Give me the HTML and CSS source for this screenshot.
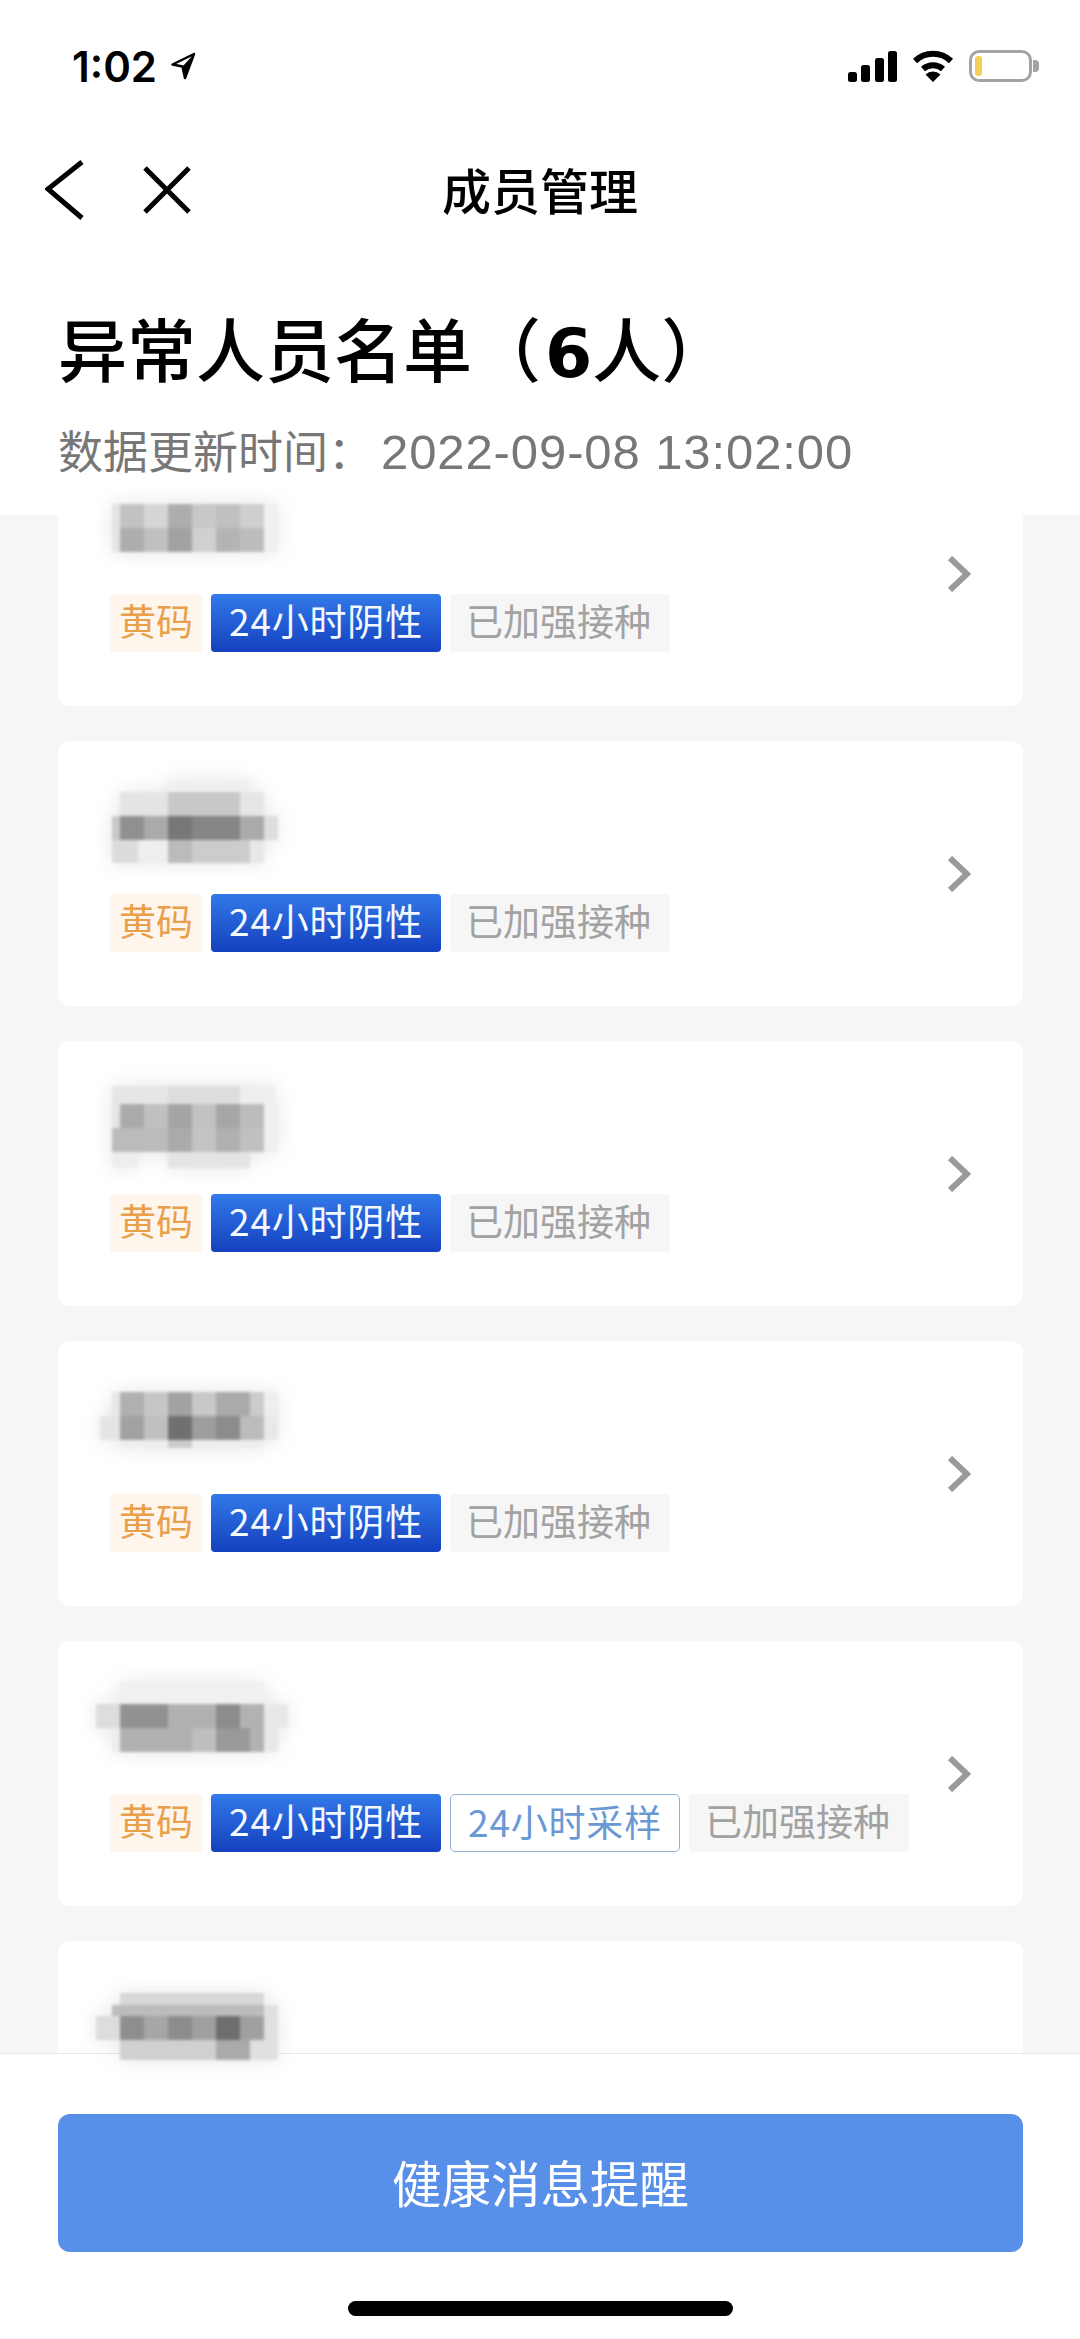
FILE: index.html
```html
<!DOCTYPE html>
<html lang="zh-CN">
<head>
    <meta charset="UTF-8">
    <meta name="viewport" content="width=device-width, initial-scale=1.0">
    <title>成员管理</title>
    <link rel="stylesheet" href="styles.css">
</head>
<body>
    <div class="page">
        <div class="header">
            <div class="status-bar">
                <div class="status-time">
                    <span>1:02</span>
                    <svg class="icon-location" width="26" height="28" viewBox="0 0 26 28">
                        <path d="M24 2 L2.500 12.500 L12.500 14.500 L15 26 Z" fill="none" stroke="#000" stroke-width="2.500" stroke-linejoin="round"/>
                        <path d="M24 2 L12.500 14.500 L15 26 Z" fill="#000"/>
                    </svg>
                </div>
                <div class="status-icons">
                    <svg width="49" height="31" viewBox="0 0 49 31">
                        <rect x="0" y="21" width="9" height="10" rx="2.500"/>
                        <rect x="13" y="14" width="9" height="17" rx="2.500"/>
                        <rect x="27" y="7" width="9" height="24" rx="2.500"/>
                        <rect x="40" y="0" width="9" height="31" rx="2.500"/>
                    </svg>
                    <svg width="42" height="32" viewBox="0 0 42 32">
                        <path d="M3 11 A26 26 0 0 1 39 11" fill="none" stroke="#000" stroke-width="6"/>
                        <path d="M11 19 A15 15 0 0 1 31 19" fill="none" stroke="#000" stroke-width="6"/>
                        <path d="M21 32 L13.500 24.500 A11 11 0 0 1 28.500 24.500 Z"/>
                    </svg>
                    <div class="battery">
                        <div class="battery-body"><div class="battery-level"></div></div>
                        <div class="battery-nub"></div>
                    </div>
                </div>
            </div>
            <div class="navbar">
                <div class="nav-icons">
                    <svg width="40" height="60" viewBox="0 0 40 60">
                        <path d="M37 2 L3 29 L37 58" fill="none" stroke="#000" stroke-width="5"/>
                    </svg>
                    <svg width="48" height="48" viewBox="0 0 48 48">
                        <path d="M2 2 L46 46 M46 2 L2 46" fill="none" stroke="#000" stroke-width="5"/>
                    </svg>
                </div>
                <div class="nav-title">成员管理</div>
            </div>
            <h1 class="page-title">异常人员名单（<span class="title-num">6</span>人）</h1>
            <div class="update-time">数据更新时间：<span class="update-value">2022-09-08 13:02:00</span></div>
        </div>

        <div class="member-list">
            <div class="card">
                <div class="card-body">
                    <svg class="name-mosaic" width="210" height="114" viewBox="0 -20 210 114">
                        <rect x="22" y="14" width="8" height="48" fill="#e4e4e4"/>
                        <rect x="174" y="14" width="14" height="48" fill="#f0f0f0"/>
                        <rect x="30" y="14" width="24" height="24" fill="#c2c2c2"/>
                        <rect x="54" y="14" width="24" height="24" fill="#d6d6d6"/>
                        <rect x="78" y="14" width="24" height="24" fill="#adadad"/>
                        <rect x="102" y="14" width="24" height="24" fill="#c8c8c8"/>
                        <rect x="126" y="14" width="24" height="24" fill="#c0c0c0"/>
                        <rect x="150" y="14" width="24" height="24" fill="#cfcfcf"/>
                        <rect x="30" y="38" width="24" height="24" fill="#adadad"/>
                        <rect x="54" y="38" width="24" height="24" fill="#c0c0c0"/>
                        <rect x="78" y="38" width="24" height="24" fill="#a2a2a2"/>
                        <rect x="102" y="38" width="24" height="24" fill="#d0d0d0"/>
                        <rect x="126" y="38" width="24" height="24" fill="#b4b4b4"/>
                        <rect x="150" y="38" width="24" height="24" fill="#bcbcbc"/>
                    </svg>
                    <div class="tags">
                        <span class="tag tag-yellow">黄码</span>
                        <span class="tag tag-blue">24小时阴性</span>
                        <span class="tag tag-gray">已加强接种</span>
                    </div>
                </div>
                <svg class="chevron" width="24" height="36" viewBox="0 0 24 36">
                    <path d="M3 2 L20 18 L3 34" fill="none" stroke="#9a9a9a" stroke-width="6"/>
                </svg>
            </div>

            <div class="card">
                <div class="card-body">
                    <svg class="name-mosaic" width="210" height="114" viewBox="0 0 210 114">
                        <rect x="78" y="10" width="82" height="12" fill="#f0f0f0"/>
                        <rect x="30" y="22" width="48" height="24" fill="#e4e4e4"/>
                        <rect x="78" y="22" width="72" height="24" fill="#c8c8c8"/>
                        <rect x="150" y="22" width="24" height="24" fill="#e6e6e6"/>
                        <rect x="22" y="46" width="8" height="24" fill="#c8c8c8"/>
                        <rect x="30" y="46" width="24" height="24" fill="#909090"/>
                        <rect x="54" y="46" width="24" height="24" fill="#aaaaaa"/>
                        <rect x="78" y="46" width="24" height="24" fill="#777777"/>
                        <rect x="102" y="46" width="48" height="24" fill="#868686"/>
                        <rect x="150" y="46" width="24" height="24" fill="#aaaaaa"/>
                        <rect x="174" y="46" width="14" height="24" fill="#dddddd"/>
                        <rect x="22" y="70" width="26" height="23" fill="#dcdcdc"/>
                        <rect x="48" y="70" width="30" height="23" fill="#eeeeee"/>
                        <rect x="78" y="70" width="24" height="23" fill="#bbbbbb"/>
                        <rect x="102" y="70" width="58" height="23" fill="#cccccc"/>
                        <rect x="160" y="70" width="14" height="23" fill="#e8e8e8"/>
                    </svg>
                    <div class="tags">
                        <span class="tag tag-yellow">黄码</span>
                        <span class="tag tag-blue">24小时阴性</span>
                        <span class="tag tag-gray">已加强接种</span>
                    </div>
                </div>
                <svg class="chevron" width="24" height="36" viewBox="0 0 24 36">
                    <path d="M3 2 L20 18 L3 34" fill="none" stroke="#9a9a9a" stroke-width="6"/>
                </svg>
            </div>

            <div class="card">
                <div class="card-body">
                    <svg class="name-mosaic" width="210" height="114" viewBox="0 0 210 114">
                        <rect x="22" y="16" width="56" height="18" fill="#e6e6e6"/>
                        <rect x="78" y="16" width="72" height="18" fill="#dddddd"/>
                        <rect x="150" y="16" width="35" height="18" fill="#eeeeee"/>
                        <rect x="22" y="34" width="8" height="24" fill="#e6e6e6"/>
                        <rect x="30" y="34" width="24" height="24" fill="#aaaaaa"/>
                        <rect x="54" y="34" width="24" height="24" fill="#c0c0c0"/>
                        <rect x="78" y="34" width="24" height="24" fill="#a4a4a4"/>
                        <rect x="102" y="34" width="24" height="24" fill="#c2c2c2"/>
                        <rect x="126" y="34" width="24" height="24" fill="#a6a6a6"/>
                        <rect x="150" y="34" width="24" height="24" fill="#bcbcbc"/>
                        <rect x="174" y="34" width="14" height="48" fill="#f0f0f0"/>
                        <rect x="22" y="58" width="56" height="24" fill="#bbbbbb"/>
                        <rect x="78" y="58" width="24" height="24" fill="#aaaaaa"/>
                        <rect x="102" y="58" width="24" height="24" fill="#c4c4c4"/>
                        <rect x="126" y="58" width="24" height="24" fill="#b0b0b0"/>
                        <rect x="150" y="58" width="24" height="24" fill="#c0c0c0"/>
                        <rect x="22" y="82" width="26" height="16" fill="#eeeeee"/>
                        <rect x="78" y="82" width="82" height="16" fill="#e4e4e4"/>
                    </svg>
                    <div class="tags">
                        <span class="tag tag-yellow">黄码</span>
                        <span class="tag tag-blue">24小时阴性</span>
                        <span class="tag tag-gray">已加强接种</span>
                    </div>
                </div>
                <svg class="chevron" width="24" height="36" viewBox="0 0 24 36">
                    <path d="M3 2 L20 18 L3 34" fill="none" stroke="#9a9a9a" stroke-width="6"/>
                </svg>
            </div>

            <div class="card">
                <div class="card-body">
                    <svg class="name-mosaic" width="210" height="114" viewBox="0 0 210 114">
                        <rect x="22" y="22" width="8" height="24" fill="#e8e8e8"/>
                        <rect x="30" y="22" width="24" height="24" fill="#b0b0b0"/>
                        <rect x="54" y="22" width="24" height="24" fill="#c6c6c6"/>
                        <rect x="78" y="22" width="24" height="24" fill="#a2a2a2"/>
                        <rect x="102" y="22" width="24" height="24" fill="#c8c8c8"/>
                        <rect x="126" y="22" width="34" height="24" fill="#aaaaaa"/>
                        <rect x="160" y="22" width="14" height="24" fill="#cccccc"/>
                        <rect x="174" y="22" width="14" height="24" fill="#eeeeee"/>
                        <rect x="10" y="46" width="20" height="24" fill="#e4e4e4"/>
                        <rect x="30" y="46" width="24" height="24" fill="#a2a2a2"/>
                        <rect x="54" y="46" width="24" height="24" fill="#c0c0c0"/>
                        <rect x="78" y="46" width="24" height="24" fill="#707070"/>
                        <rect x="102" y="46" width="24" height="24" fill="#9e9e9e"/>
                        <rect x="126" y="46" width="24" height="24" fill="#8c8c8c"/>
                        <rect x="150" y="46" width="24" height="24" fill="#bcbcbc"/>
                        <rect x="174" y="46" width="14" height="24" fill="#e8e8e8"/>
                        <rect x="30" y="70" width="144" height="8" fill="#eeeeee"/>
                        <rect x="78" y="70" width="24" height="8" fill="#cccccc"/>
                    </svg>
                    <div class="tags">
                        <span class="tag tag-yellow">黄码</span>
                        <span class="tag tag-blue">24小时阴性</span>
                        <span class="tag tag-gray">已加强接种</span>
                    </div>
                </div>
                <svg class="chevron" width="24" height="36" viewBox="0 0 24 36">
                    <path d="M3 2 L20 18 L3 34" fill="none" stroke="#9a9a9a" stroke-width="6"/>
                </svg>
            </div>

            <div class="card">
                <div class="card-body">
                    <svg class="name-mosaic" width="210" height="114" viewBox="0 0 210 114">
                        <rect x="30" y="12" width="144" height="22" fill="#f0f0f0"/>
                        <rect x="6" y="34" width="24" height="24" fill="#dddddd"/>
                        <rect x="30" y="34" width="48" height="24" fill="#929292"/>
                        <rect x="78" y="34" width="48" height="24" fill="#b0b0b0"/>
                        <rect x="126" y="34" width="24" height="24" fill="#8c8c8c"/>
                        <rect x="150" y="34" width="24" height="24" fill="#b2b2b2"/>
                        <rect x="174" y="34" width="24" height="24" fill="#e8e8e8"/>
                        <rect x="22" y="58" width="8" height="24" fill="#eeeeee"/>
                        <rect x="30" y="58" width="72" height="24" fill="#b0b0b0"/>
                        <rect x="102" y="58" width="24" height="24" fill="#bebebe"/>
                        <rect x="126" y="58" width="34" height="24" fill="#999999"/>
                        <rect x="160" y="58" width="14" height="24" fill="#b2b2b2"/>
                        <rect x="174" y="58" width="14" height="24" fill="#e8e8e8"/>
                    </svg>
                    <div class="tags">
                        <span class="tag tag-yellow">黄码</span>
                        <span class="tag tag-blue">24小时阴性</span>
                        <span class="tag tag-outline">24小时采样</span>
                        <span class="tag tag-gray">已加强接种</span>
                    </div>
                </div>
                <svg class="chevron" width="24" height="36" viewBox="0 0 24 36">
                    <path d="M3 2 L20 18 L3 34" fill="none" stroke="#9a9a9a" stroke-width="6"/>
                </svg>
            </div>

            <div class="card">
                <div class="card-body">
                    <svg class="name-mosaic" width="210" height="114" viewBox="0 -5 210 114">
                        <rect x="30" y="18" width="144" height="12" fill="#d8d8d8"/>
                        <rect x="22" y="30" width="152" height="11" fill="#bcbcbc"/>
                        <rect x="174" y="30" width="14" height="11" fill="#e0e0e0"/>
                        <rect x="6" y="41" width="24" height="24" fill="#dddddd"/>
                        <rect x="30" y="41" width="24" height="24" fill="#8e8e8e"/>
                        <rect x="54" y="41" width="24" height="24" fill="#a6a6a6"/>
                        <rect x="78" y="41" width="24" height="24" fill="#8c8c8c"/>
                        <rect x="102" y="41" width="24" height="24" fill="#a0a0a0"/>
                        <rect x="126" y="41" width="24" height="24" fill="#6e6e6e"/>
                        <rect x="150" y="41" width="24" height="24" fill="#a0a0a0"/>
                        <rect x="174" y="41" width="14" height="24" fill="#e0e0e0"/>
                        <rect x="30" y="65" width="96" height="20" fill="#d0d0d0"/>
                        <rect x="126" y="65" width="34" height="20" fill="#aaaaaa"/>
                        <rect x="160" y="65" width="28" height="20" fill="#e0e0e0"/>
                    </svg>
                </div>
            </div>
        </div>

        <div class="footer">
            <button class="remind-btn" type="button">健康消息提醒</button>
            <div class="home-bar"></div>
        </div>
    </div>
</body>
</html>
```

FILE: styles.css
```css
* {
    box-sizing: border-box;
}

body {
    margin: 0;
    font-family: "Liberation Sans", "Noto Sans CJK SC", sans-serif;
    background-color: #fff;
}

.page {
    display: flex;
    flex-direction: column;
    height: 2339px;
    overflow: hidden;
}

.header {
    position: relative;
    z-index: 1;
    flex: none;
    height: 515px;
    background-color: #fff;
}

.status-bar {
    display: flex;
    justify-content: space-between;
    align-items: center;
    height: 132px;
    padding: 0 41px 0 72px;
}

.status-time {
    display: flex;
    align-items: center;
    gap: 13px;
    font-family: Inter, sans-serif;
    font-size: 42px;
    font-weight: 600;
    color: #000;
}

.status-icons {
    display: flex;
    align-items: center;
    gap: 15px;
}

.battery {
    display: flex;
    align-items: center;
    gap: 1px;
}

.battery-body {
    width: 63px;
    height: 32px;
    padding: 3px;
    border: 3px solid #a3a3a3;
    border-radius: 10px;
}

.battery-level {
    width: 7px;
    height: 100%;
    background-color: #f2cf57;
    border-radius: 3px;
}

.battery-nub {
    width: 6px;
    height: 12px;
    background-color: #a3a3a3;
    border-radius: 0 4px 4px 0;
}

.navbar {
    display: grid;
    grid-template-columns: 1fr auto 1fr;
    align-items: center;
    height: 116px;
}

.nav-icons {
    display: flex;
    align-items: center;
    gap: 58px;
    padding-left: 45px;
}

.nav-title {
    padding-bottom: 3px;
    font-family: "Noto Sans CJK SC", sans-serif;
    font-size: 49px;
    font-weight: 500;
    color: #000;
}

.page-title {
    margin: 52px 0 0;
    padding-left: 58px;
    height: 94px;
    line-height: 94px;
    font-family: "Noto Sans CJK SC", sans-serif;
    font-size: 69px;
    font-weight: 500;
    color: #000;
}

.title-num {
    margin-left: 4px;
    font-family: "DejaVu Sans", sans-serif;
    font-size: 68px;
    font-weight: 700;
}

.update-time {
    margin-top: 26px;
    padding-left: 58px;
    line-height: 60px;
    font-family: "Noto Sans CJK SC", sans-serif;
    font-size: 45px;
    color: #777;
}

.update-value {
    margin-left: 8px;
    font-family: "Liberation Sans", sans-serif;
    font-size: 49px;
    letter-spacing: 0.9px;
}

.member-list {
    display: flex;
    flex-direction: column;
    flex: 1;
    min-height: 0;
    gap: 35px;
    padding: 0 57px 0 58px;
    background-color: #f6f6f6;
}

.card {
    display: flex;
    justify-content: space-between;
    align-items: center;
    flex: none;
    height: 265px;
    padding: 0 52px 0 52px;
    background-color: #fff;
    border-radius: 12px;
}

/* list is scrolled, first card sits under the header */
.card:first-child {
    margin-top: -74px;
}

.card-body {
    align-self: flex-start;
    padding-top: 29px;
}

.name-mosaic {
    position: relative;
    z-index: 2;
    display: block;
    margin-left: -20px;
    filter: blur(1.6px) drop-shadow(0 0 10px rgba(0, 0, 0, 0.1));
}

.tags {
    display: flex;
    gap: 9px;
    margin-top: 10px;
}

.tag {
    height: 58px;
    line-height: 52px;
    font-family: "Noto Sans CJK SC", sans-serif;
    font-size: 37px;
    white-space: nowrap;
    border-radius: 4px;
}

.tag-yellow {
    padding: 0 9px;
    color: #e8a04a;
    background-color: #fef6ec;
}

.tag-blue {
    width: 230px;
    text-align: center;
    letter-spacing: 0.8px;
    color: #f4f8ff;
    background: linear-gradient(to bottom, #3279e8, #1540bf);
}

.tag-outline {
    width: 230px;
    text-align: center;
    letter-spacing: 0.8px;
    color: #6a98d4;
    background-color: #fff;
    border: 1px solid #8db0d6;
    border-radius: 5px;
}

.tag-gray {
    padding: 0 19px 0 16px;
    color: #a2a2a2;
    background-color: #f6f6f6;
}

.chevron {
    flex: none;
}

.footer {
    position: relative;
    z-index: 1;
    display: flex;
    flex-direction: column;
    align-items: center;
    flex: none;
    height: 286px;
    padding: 60px 57px 0 58px;
    background-color: #fff;
    border-top: 1px solid #e9e9e9;
}

.remind-btn {
    width: 100%;
    height: 138px;
    padding: 0 0 3px;
    font-family: "Noto Sans CJK SC", sans-serif;
    font-size: 49.500px;
    color: #fff;
    background-color: #578fe9;
    border: none;
    border-radius: 12px;
}

.home-bar {
    width: 385px;
    height: 15px;
    margin-top: 49px;
    background-color: #000;
    border-radius: 8px;
}
```
